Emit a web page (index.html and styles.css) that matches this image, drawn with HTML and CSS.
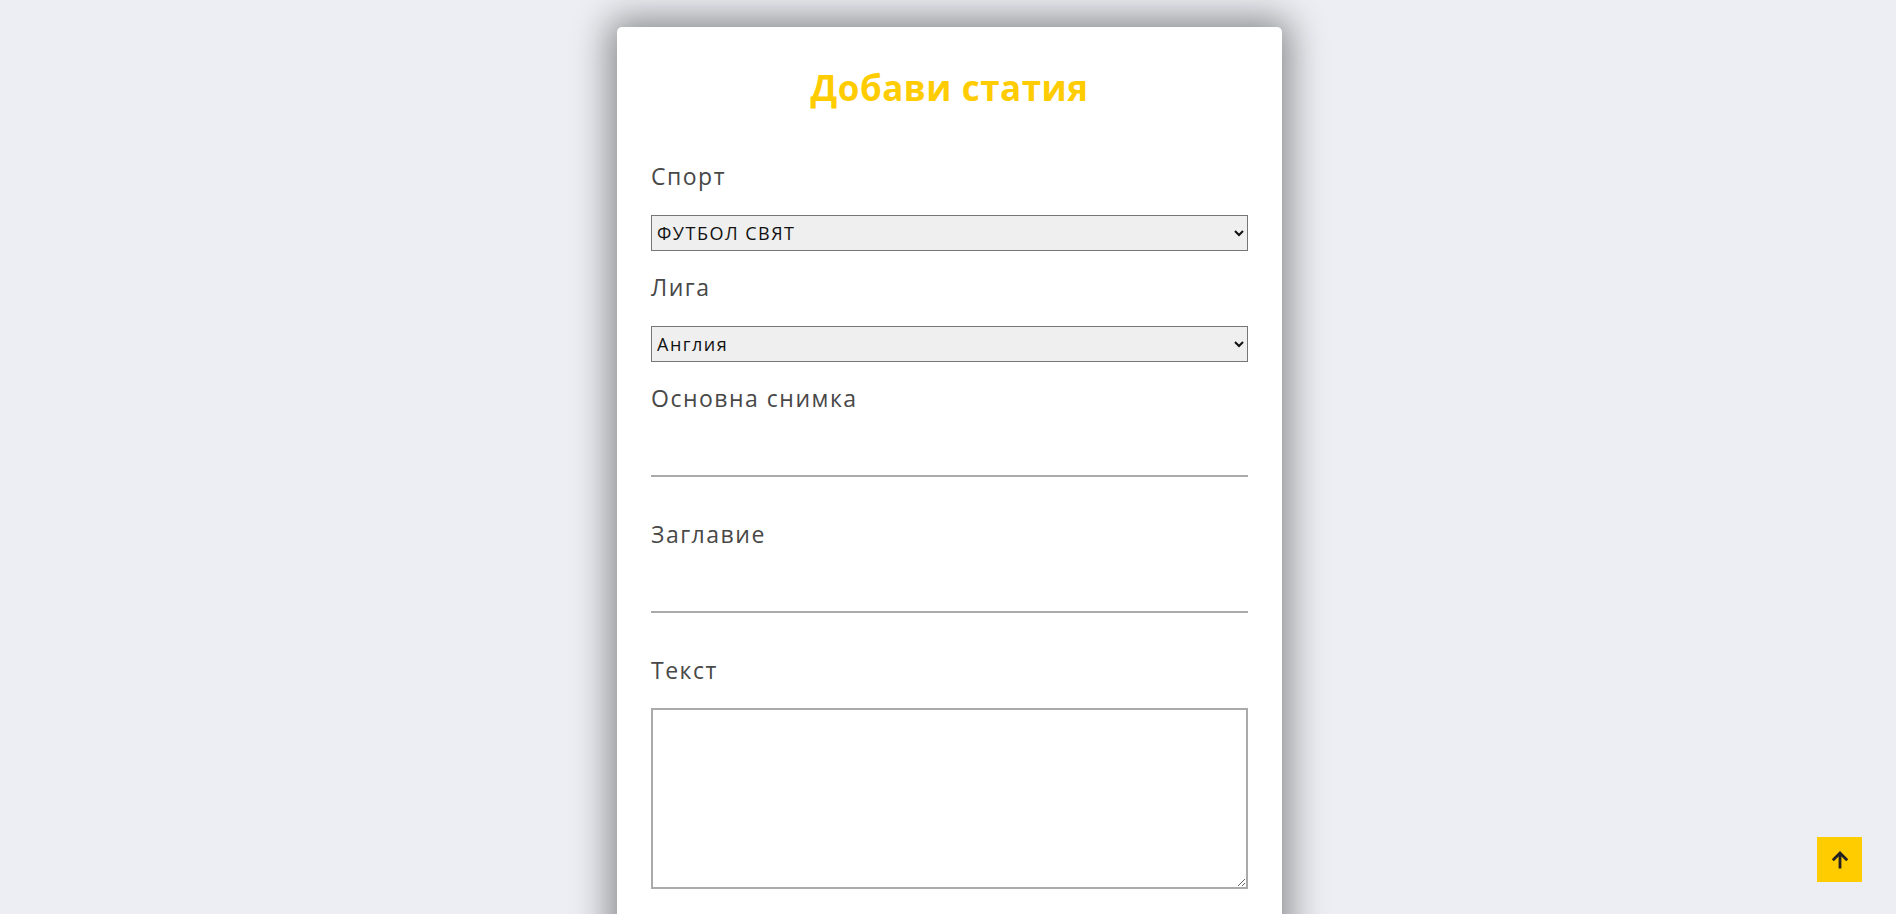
FILE: index.html
```html
<!DOCTYPE html>
<html lang="bg">
<head>
<meta charset="utf-8">
<title>Добави статия</title>
<link rel="stylesheet" href="styles.css">
</head>
<body>
<main class="page">
  <form class="card">
    <h1 class="title">Добави статия</h1>
    <div class="field">
      <label class="label" for="sport">Спорт</label>
      <select id="sport" class="select">
        <option>ФУТБОЛ СВЯТ</option>
      </select>
    </div>
    <div class="field">
      <label class="label" for="league">Лига</label>
      <select id="league" class="select">
        <option>Англия</option>
      </select>
    </div>
    <div class="field field-input">
      <label class="label" for="image">Основна снимка</label>
      <input id="image" class="line-input" type="text">
    </div>
    <div class="field field-input">
      <label class="label" for="heading">Заглавие</label>
      <input id="heading" class="line-input" type="text">
    </div>
    <div class="field">
      <label class="label" for="body">Текст</label>
      <textarea id="body" class="textarea"></textarea>
    </div>
    <div class="actions">
      <button type="submit" class="submit">Добави</button>
    </div>
  </form>
</main>
<a class="to-top" href="#" aria-label="Нагоре">
  <svg viewBox="0 0 24 24" width="24" height="24"><path d="M12 20.5V5.5M4.8 12.2L12 5l7.2 7.2"/></svg>
</a>
</body>
</html>
```

FILE: styles.css
```css
html, body {
  margin: 0;
  padding: 0;
}
body {
  background: #eceef3;
  font-family: "Open Sans", "Noto Sans", sans-serif;
  color: #444;
}
.page {
  display: flex;
  justify-content: center;
  padding-top: 27px;
  padding-left: 3px;
}
.card {
  width: 597px;
  background: #fff;
  border-radius: 5px;
  padding: 40px 34px 40px;
  box-shadow: 0 0 36px 8px rgba(0, 0, 0, 0.42);
  display: flex;
  flex-direction: column;
}
.title {
  margin: 0 0 54px;
  text-align: center;
  color: #ffcc00;
  font-size: 35px;
  line-height: 42px;
  font-weight: 700;
  letter-spacing: 0.5px;
}
.field {
  display: flex;
  flex-direction: column;
  margin-bottom: 24px;
}
.field-input {
  margin-bottom: 44px;
}
.label {
  font-size: 23px;
  line-height: 27px;
  color: #484848;
  letter-spacing: 1.5px;
  margin-bottom: 24px;
}
.select {
  height: 36px;
  margin-top: 1px;
  margin-bottom: -1px;
  font-family: inherit;
  font-size: 18px;
  letter-spacing: 1.5px;
  color: #111;
  background: #efefef;
  border: 1px solid #767676;
  border-radius: 0;
  padding: 0 1px;
}
.line-input {
  height: 39px;
  border: none;
  border-bottom: 2px solid #aaa;
  outline: none;
  padding: 0;
  font-family: inherit;
  font-size: 18px;
  background: transparent;
}
.textarea {
  height: 177px;
  border: 2px solid #aaa;
  padding: 0;
  font-family: inherit;
  resize: vertical;
}
.actions {
  display: flex;
  justify-content: center;
  margin-top: 32px;
}
.submit {
  width: 140px;
  height: 44px;
  border: none;
  background: #fff;
  box-shadow: 0 0 14px rgba(0, 0, 0, 0.12);
  font-family: inherit;
  font-size: 18px;
  color: #444;
}
.to-top {
  position: fixed;
  right: 34px;
  bottom: 32px;
  width: 45px;
  height: 45px;
  background: #ffcc00;
  display: flex;
  align-items: center;
  justify-content: center;
}
.to-top svg {
  fill: none;
  stroke: #222;
  stroke-width: 2.8;
}
```
